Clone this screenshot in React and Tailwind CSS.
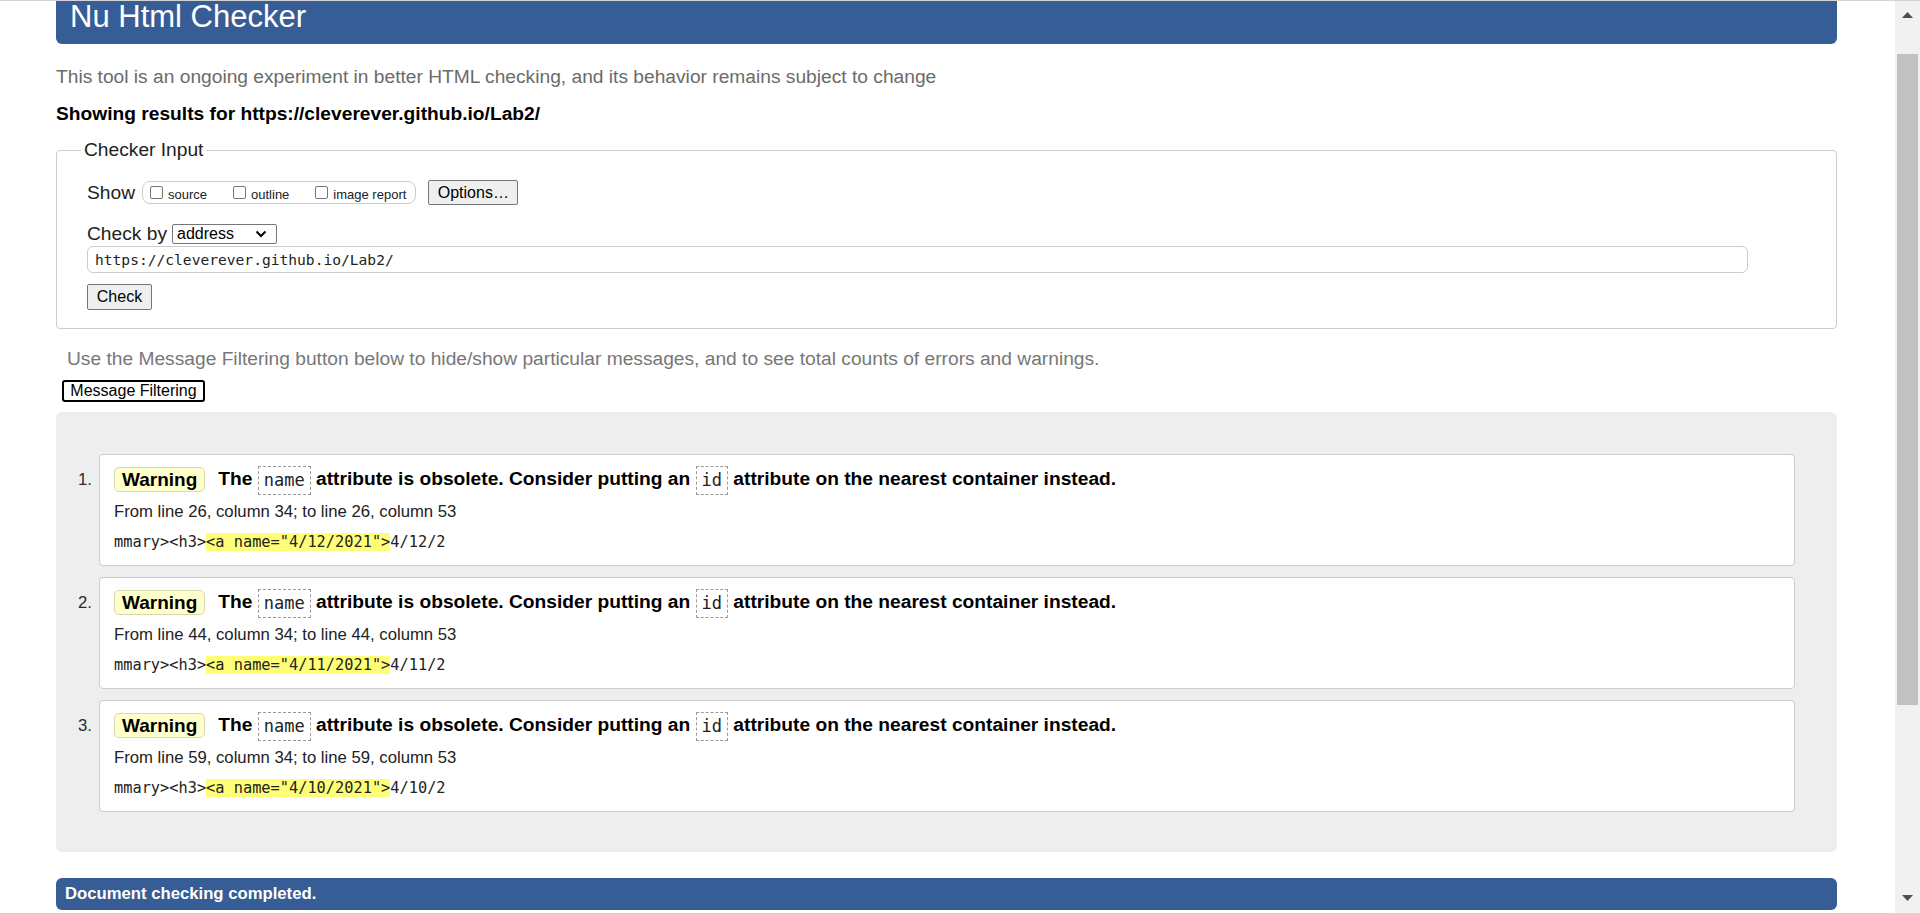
import React from "react";

const sans = { fontFamily: '"Liberation Sans", Arial, sans-serif' };

function Code({ children }) {
  return (
    <span className="inline-block align-middle border border-dashed border-[#999] px-[5px] py-[3px] leading-[21px] text-[17px] font-normal text-[#222] font-['DejaVu_Sans_Mono',monospace]">
      {children}
    </span>
  );
}

function Card({ n, line, date, short }) {
  return (
    <div className="flex">
      <div className="w-[43px] shrink-0 pt-[16px] pr-[7px] text-right text-[16.7px] leading-[20px] text-[#2b2b2b]">
        {n}.
      </div>
      <div className="flex-1 bg-white border border-[#cccccc] rounded-[4px] pl-[14px] pt-[10px] pb-[13px]">
        <div className="flex items-center h-[29px]">
          <span className="inline-flex items-center h-[25px] px-[7px] bg-[#ffffcc] border border-[#d8d8b0] rounded-[5px] text-[19px] font-bold text-black leading-[22px]">
            Warning
          </span>
          <span className="ml-[13px] text-[19.2px] font-bold text-black leading-[29px] whitespace-nowrap">
            The <Code>name</Code> attribute is obsolete. Consider putting an <Code>id</Code> attribute on the nearest container instead.
          </span>
        </div>
        <div className="mt-[8px] text-[16.7px] leading-[20px] text-[#222]">
          From line {line}, column 34; to line {line}, column 53
        </div>
        <div className="mt-[10px] text-[15.3px] leading-[20px] text-[#222] whitespace-pre font-['DejaVu_Sans_Mono',monospace]">
          {"mmary><h3>"}
          <span className="bg-[#ffff77]">{`<a name="${date}">`}</span>
          {short}
        </div>
      </div>
    </div>
  );
}

export default function App() {
  return (
    <div className="w-[1920px] h-[913px] flex overflow-hidden bg-white border-t border-[#d4d4d4]" style={sans}>
      <div className="flex-1 pl-[56px] pr-[58px] flex flex-col">
        <div className="h-[43px] bg-[#365d95] rounded-b-[6px] pl-[14px]">
          <h1 className="text-[31px] leading-[32px] text-white font-normal">Nu Html Checker</h1>
        </div>

        <p className="mt-[22px] text-[19.2px] leading-[22px] text-[#6b6b6b]">
          This tool is an ongoing experiment in better HTML checking, and its behavior remains subject to change
        </p>
        <p className="mt-[15px] text-[19.2px] leading-[22px] font-bold text-black">
          Showing results for https://cleverever.github.io/Lab2/
        </p>

        <fieldset className="mt-[14px] border border-[#cccccc] rounded-[4px] pl-[30px] pr-[30px] pb-[18px]">
          <legend className="-ml-[6px] px-[3px] text-[19.2px] leading-[22px] text-[#222]">Checker Input</legend>

          <div className="mt-[19px] flex items-center h-[25px]">
            <span className="text-[19.2px] leading-[22px] text-[#222]">Show</span>
            <div className="ml-[7px] flex items-center h-[23px] border border-[#cccccc] rounded-[8px] pl-[7px] pr-[9px]">
              <span className="w-[13px] h-[13px] border border-[#767676] rounded-[2px] bg-white" />
              <span className="ml-[5px] pt-[5px] text-[13px] leading-[14px] text-[#222]">source</span>
              <span className="ml-[26px] w-[13px] h-[13px] border border-[#767676] rounded-[2px] bg-white" />
              <span className="ml-[5px] pt-[5px] text-[13px] leading-[14px] text-[#222]">outline</span>
              <span className="ml-[26px] w-[13px] h-[13px] border border-[#767676] rounded-[2px] bg-white" />
              <span className="ml-[5px] pt-[5px] text-[13px] leading-[14px] text-[#222]">image report</span>
            </div>
            <button className="ml-[12px] h-[25px] w-[90px] bg-[#efefef] border border-[#767676] rounded-[2px] text-[16px] leading-[20px] text-black">
              Options…
            </button>
          </div>

          <div className="mt-[18px] flex items-center h-[22px]">
            <span className="text-[19.2px] leading-[22px] text-[#222]">Check by</span>
            <div className="ml-[5px] flex items-center justify-between w-[105px] h-[20px] border border-[#767676] rounded-[2px] bg-white pl-[4px] pr-[9px]">
              <span className="text-[16px] leading-[18px] text-black">address</span>
              <svg width="12" height="8" viewBox="0 0 12 8">
                <path d="M1.5 1.5 L6 6 L10.5 1.5" fill="none" stroke="#000" strokeWidth="2" />
              </svg>
            </div>
          </div>

          <div className="mt-[1px] mr-[58px] h-[27px] border border-[#cccccc] rounded-[6px] flex items-center pl-[7px]">
            <span className="text-[14.6px] leading-[18px] text-[#222] font-['DejaVu_Sans_Mono',monospace]">
              https://cleverever.github.io/Lab2/
            </span>
          </div>

          <button className="mt-[11px] block h-[26px] w-[65px] bg-[#efefef] border border-[#767676] rounded-[2px] text-[16px] leading-[20px] text-black">
            Check
          </button>
        </fieldset>

        <p className="mt-[19px] ml-[11px] text-[19.2px] leading-[22px] text-[#777]">
          Use the Message Filtering button below to hide/show particular messages, and to see total counts of errors and warnings.
        </p>
        <div className="mt-[9px] ml-[6px]">
          <button className="h-[22px] w-[143px] bg-white border-2 border-black rounded-[3px] text-[16px] leading-[18px] text-black">
            Message Filtering
          </button>
        </div>

        <div className="mt-[9px] bg-[#eeeeee] rounded-[6px] pt-[42px] pb-[40px] pr-[42px] flex flex-col gap-[11px]">
          <Card n={1} line={26} date="4/12/2021" short="4/12/2" />
          <Card n={2} line={44} date="4/11/2021" short="4/11/2" />
          <Card n={3} line={59} date="4/10/2021" short="4/10/2" />
        </div>

        <div className="mt-[26px] h-[32px] bg-[#365d95] rounded-[6px] flex items-center pl-[9px]">
          <span className="text-[16.7px] leading-[20px] font-bold text-white">Document checking completed.</span>
        </div>
      </div>

      <div className="w-[25px] shrink-0 bg-[#f1f1f1] flex flex-col items-center">
        <div className="h-[28px] flex items-center justify-center">
          <svg width="11" height="6" viewBox="0 0 11 6">
            <path d="M5.5 0 L11 6 L0 6 Z" fill="#505050" />
          </svg>
        </div>
        <div className="h-[25px]" />
        <div className="w-[21px] h-[651px] bg-[#c1c1c1]" />
        <div className="flex-1" />
        <div className="h-[18px] flex items-start justify-center">
          <svg width="11" height="6" viewBox="0 0 11 6">
            <path d="M0 0 L11 0 L5.5 6 Z" fill="#505050" />
          </svg>
        </div>
      </div>
    </div>
  );
}
